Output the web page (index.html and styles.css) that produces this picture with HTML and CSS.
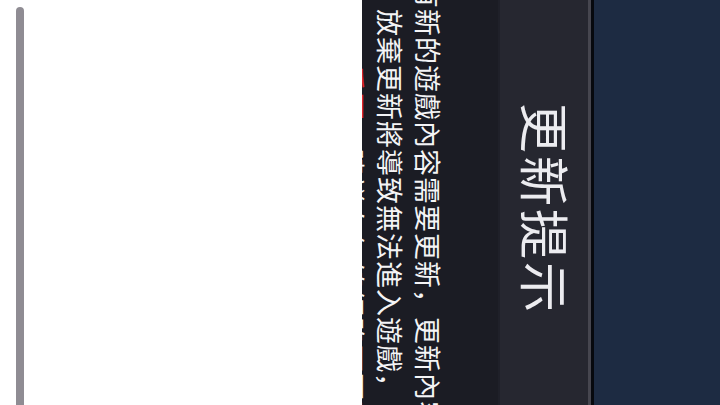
FILE: index.html
```html
<!DOCTYPE html>
<html lang="zh-Hant">
<head>
<meta charset="utf-8">
<title>更新提示</title>
<link rel="stylesheet" href="styles.css">
</head>
<body>
<div class="screen">
  <div class="blank">
    <div class="track"></div>
  </div>
  <div class="panel">
    <p class="msg" lang="zh-Hans">有新的遊戲內容需要更新，更新內容<br>放棄更新將導致無法進入遊戲，<br>　　　<span class="red">重要</span>：建議在無線網路下更新</p>
  </div>
  <div class="header">
    <h1 class="title">更新提示</h1>
  </div>
  <div class="edge"></div>
  <div class="shadow"></div>
  <div class="backdrop"></div>
</div>
</body>
</html>
```

FILE: styles.css
```css
html, body {
  margin: 0;
  padding: 0;
  background: #ffffff;
}

.screen {
  display: flex;
  width: 720px;
  height: 405px;
  overflow: hidden;
  font-family: "Noto Sans CJK TC", "Noto Sans CJK SC", sans-serif;
}

.blank {
  width: 362px;
  flex: none;
  background: #ffffff;
  padding: 7px 0 0 16px;
  box-sizing: border-box;
}

.track {
  width: 8px;
  height: 420px;
  background: #8f8c93;
  border-radius: 4px 4px 0 0;
}

.panel {
  width: 136px;
  flex: none;
  background: #1b1c24;
  display: flex;
  align-items: center;
  justify-content: flex-end;
  overflow: hidden;
}

.msg {
  flex: none;
  margin: 4px 51px 0 0;
  height: 480px;
  writing-mode: vertical-rl;
  text-orientation: sideways;
  text-align: center;
  white-space: nowrap;
  color: #f4f4f6;
  font-family: "Noto Sans CJK SC", "Noto Sans CJK TC", sans-serif;
  font-size: 27px;
  line-height: 38px;
  letter-spacing: 1px;
}

.red {
  color: #e0242a;
}

.header {
  width: 90px;
  flex: none;
  background: #262730;
  border-left: 2px solid #1f2029;
  box-sizing: border-box;
  display: flex;
  align-items: center;
  justify-content: center;
  padding: 12px 0 0 6px;
}

.title {
  margin: 0;
  writing-mode: vertical-rl;
  text-orientation: sideways;
  font-size: 50px;
  line-height: 60px;
  font-weight: 400;
  letter-spacing: 3px;
  color: #ececf0;
}

.edge {
  width: 3px;
  flex: none;
  background: #46464f;
}

.shadow {
  width: 3px;
  flex: none;
  background: #07090e;
}

.backdrop {
  flex: 1;
  background: #1d2b42;
}
```
